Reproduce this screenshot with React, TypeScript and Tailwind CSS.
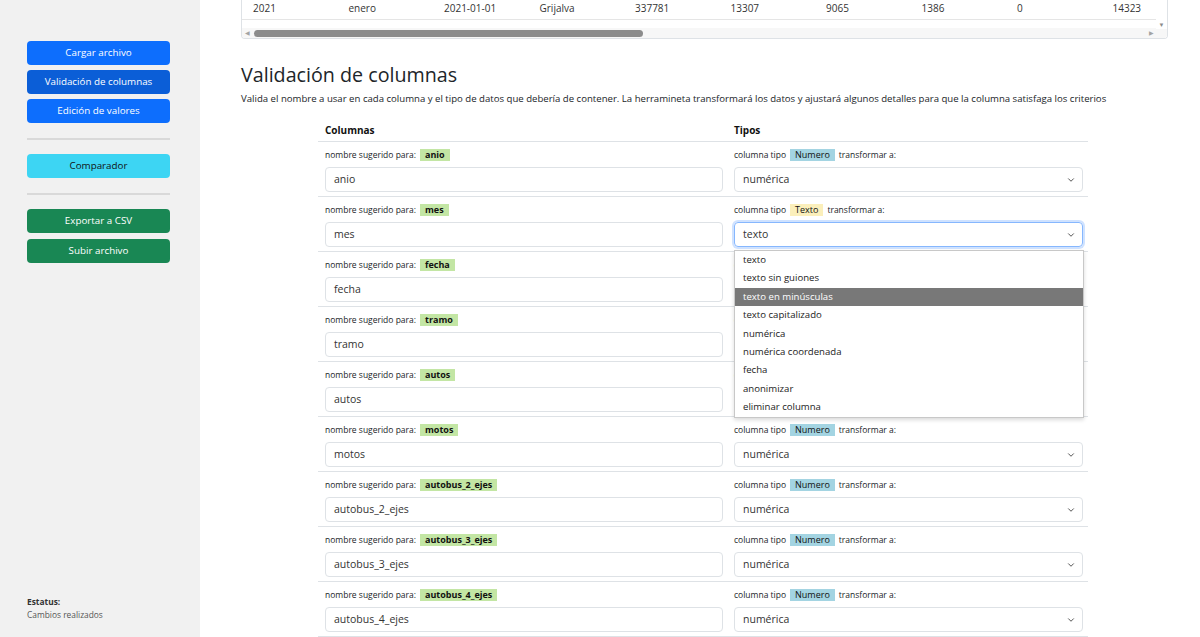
import { ChevronDown } from "lucide-react";

const filas = [
  { nombre: "anio", tipo: "Numero", valor: "numérica" },
  { nombre: "mes", tipo: "Texto", valor: "texto", abierto: true },
  { nombre: "fecha", tipo: "Texto", valor: "fecha" },
  { nombre: "tramo", tipo: "Texto", valor: "texto" },
  { nombre: "autos", tipo: "Numero", valor: "numérica" },
  { nombre: "motos", tipo: "Numero", valor: "numérica" },
  { nombre: "autobus_2_ejes", tipo: "Numero", valor: "numérica" },
  { nombre: "autobus_3_ejes", tipo: "Numero", valor: "numérica" },
  { nombre: "autobus_4_ejes", tipo: "Numero", valor: "numérica" },
];

const opciones = [
  "texto",
  "texto sin guiones",
  "texto en minúsculas",
  "texto capitalizado",
  "numérica",
  "numérica coordenada",
  "fecha",
  "anonimizar",
  "eliminar columna",
];

const datos = ["2021", "enero", "2021-01-01", "Grijalva", "337781", "13307", "9065", "1386", "0", "14323"];

function Sidebar() {
  return (
    <aside className="w-[200px] shrink-0 bg-[#f1f1f1] flex flex-col pl-[27px] pr-[30px] pt-[41px] pb-[16px]">
      <div className="flex flex-col gap-[5px]">
        <button className="h-[24px] rounded-[4px] bg-[#0d6efd] text-white text-[9.8px]">Cargar archivo</button>
        <button className="h-[24px] rounded-[4px] bg-[#0b5ed7] text-white text-[9.8px]">Validación de columnas</button>
        <button className="h-[24px] rounded-[4px] bg-[#0d6efd] text-white text-[9.8px]">Edición de valores</button>
      </div>
      <hr className="mt-[15px] mb-[14px] border-t-2 border-[#d9d9d9]" />
      <button className="h-[24px] rounded-[4px] bg-[#3dd5f3] text-[#111] text-[9.8px]">Comparador</button>
      <hr className="mt-[15px] mb-[14px] border-t-2 border-[#d9d9d9]" />
      <div className="flex flex-col gap-[6px]">
        <button className="h-[24px] rounded-[4px] bg-[#198754] text-white text-[9.8px]">Exportar a CSV</button>
        <button className="h-[24px] rounded-[4px] bg-[#198754] text-white text-[9.8px]">Subir archivo</button>
      </div>
      <div className="mt-auto text-[8.4px] leading-[13px] text-[#555]">
        <div className="font-bold text-[#333]">Estatus:</div>
        <div>Cambios realizados</div>
      </div>
    </aside>
  );
}

function TablaDatos() {
  return (
    <div className="w-[927px] border border-t-0 border-[#dee2e6] rounded-b-[4px] bg-white flex overflow-hidden">
      <div className="flex-1 min-w-0 flex flex-col">
        <div className="h-[20px] flex items-center border-b border-[#e5e5e5] pl-[11px] text-[10px] text-[#333] overflow-hidden">
          {datos.map((d, i) => (
            <div key={i} className="w-[95.5px] shrink-0 -mt-[3px]">
              {d}
            </div>
          ))}
        </div>
        <div className="h-[8px]" />
        <div className="h-[10px] flex items-center bg-[#f7f7f7]">
          <span className="w-[10px] text-[6px] text-[#a3a3a3] text-center">◀</span>
          <div className="ml-[2px] w-[389px] h-[7px] rounded-full bg-[#8c8c8c]" />
          <div className="flex-1" />
          <span className="w-[10px] text-[6px] text-[#a3a3a3] text-center">▶</span>
        </div>
      </div>
      <div className="w-[11px] shrink-0 flex flex-col bg-white">
        <div className="h-[21px]" />
        <span className="text-[6px] text-[#8a8a8a] text-center leading-[8px]">▼</span>
        <div className="flex-1 bg-[#f7f7f7]" />
      </div>
    </div>
  );
}

function Badge({ texto, tipo }: { texto: string; tipo: "nombre" | "Numero" | "Texto" }) {
  const color = tipo === "nombre" ? "bg-[#c3e6a4] font-bold" : tipo === "Numero" ? "bg-[#a3d4e2]" : "bg-[#fbefbb]";
  return <span className={`inline-block px-[5px] leading-[12px] text-[9px] text-[#111] ${color}`}>{texto}</span>;
}

function Fila({ f }: { f: (typeof filas)[number] }) {
  return (
    <div className="flex border-b border-[#dee2e6] h-[55px]">
      <div className="w-[411px] pl-[7px] pr-[6px] pt-[7px]">
        <div className="flex items-center gap-[4px] text-[8.5px] text-[#212529] h-[12px]">
          <span>nombre sugerido para:</span>
          <Badge texto={f.nombre} tipo="nombre" />
        </div>
        <div className="mt-[6px] h-[25px] border border-[#dee2e6] rounded-[4px] flex items-center pl-[8px] text-[10.5px] text-[#333]">
          {f.nombre}
        </div>
      </div>
      <div className="flex-1 pl-[5px] pr-[5px] pt-[7px] relative">
        <div className="flex items-center gap-[4px] text-[8.5px] text-[#212529] h-[12px]">
          <span>columna tipo</span>
          <Badge texto={f.tipo} tipo={f.tipo as "Numero" | "Texto"} />
          <span>transformar a:</span>
        </div>
        <div
          className={`mt-[6px] h-[25px] border rounded-[4px] flex items-center pl-[8px] pr-[6px] text-[10.5px] text-[#333] ${
            f.abierto ? "border-[#86b7fe] shadow-[0_0_0_2px_rgba(13,110,253,0.2)]" : "border-[#dee2e6]"
          }`}
        >
          <span className="flex-1">{f.valor}</span>
          <ChevronDown className="w-[10px] h-[10px] text-[#333]" strokeWidth={2} />
        </div>
        {f.abierto && (
          <div className="absolute left-[5px] right-[4px] top-[53px] z-10 bg-white border border-[#c8c8c8] shadow-[0_2px_4px_rgba(0,0,0,0.15)]">
            {opciones.map((o) => (
              <div
                key={o}
                className={`h-[18.4px] flex items-center pl-[8px] text-[9.6px] ${
                  o === "texto en minúsculas" ? "bg-[#787878] text-white" : "text-[#222]"
                }`}
              >
                {o}
              </div>
            ))}
          </div>
        )}
      </div>
    </div>
  );
}

export default function App() {
  return (
    <div className="flex h-[637px] overflow-hidden bg-white font-['Open_Sans',sans-serif]">
      <Sidebar />
      <main className="flex-1 min-w-0 pl-[41px] overflow-hidden">
        <TablaDatos />
        <h2 className="mt-[22px] text-[19.7px] leading-[28px] text-[#212529]">Validación de columnas</h2>
        <p className="mt-[3px] text-[9.6px] leading-[14px] text-[#212529]">
          Valida el nombre a usar en cada columna y el tipo de datos que debería de contener. La herramineta transformará los datos y ajustará algunos detalles para que la columna satisfaga los criterios
        </p>
        <div className="w-[770px] ml-[77px] mt-[13px]">
          <div className="flex h-[23px] border-b border-[#dee2e6] text-[10px] font-bold text-[#111] items-center">
            <div className="w-[411px] pl-[7px]">Columnas</div>
            <div className="pl-[5px]">Tipos</div>
          </div>
          {filas.map((f) => (
            <Fila key={f.nombre} f={f} />
          ))}
        </div>
      </main>
    </div>
  );
}
